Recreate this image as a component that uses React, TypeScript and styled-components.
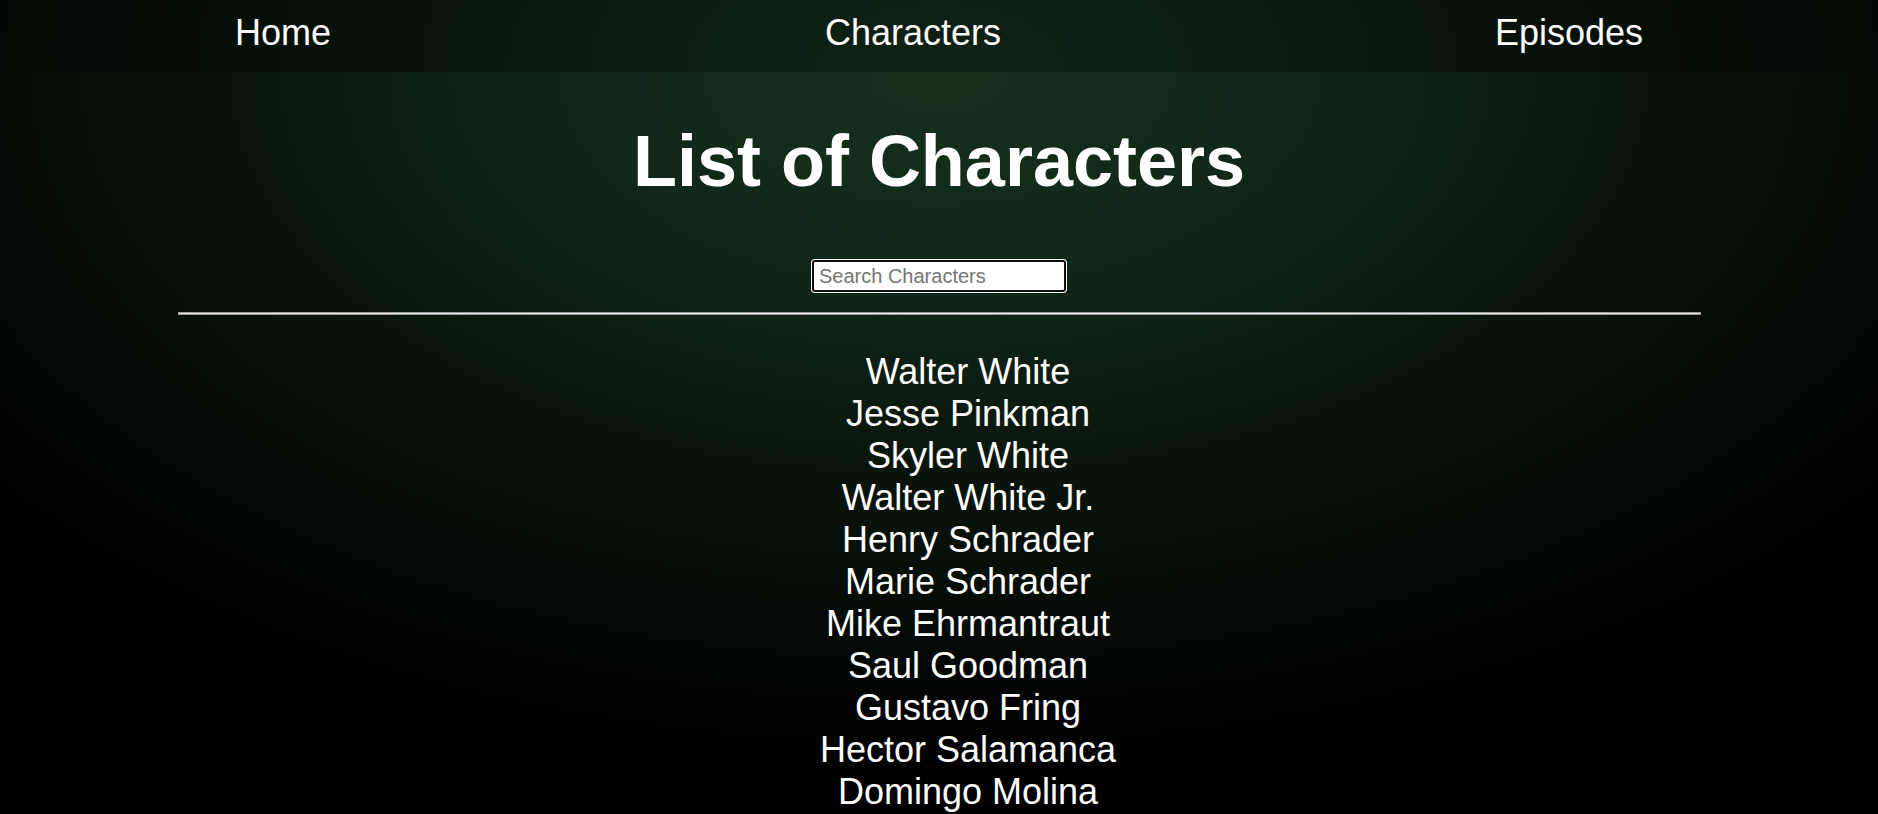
import styled, { createGlobalStyle } from "styled-components";

const characters = [
	"Walter White",
	"Jesse Pinkman",
	"Skyler White",
	"Walter White Jr.",
	"Henry Schrader",
	"Marie Schrader",
	"Mike Ehrmantraut",
	"Saul Goodman",
	"Gustavo Fring",
	"Hector Salamanca",
	"Domingo Molina",
];

const GlobalStyle = createGlobalStyle`
	html, body {
		margin: 0;
		padding: 0;
		overflow: hidden;
	}

	body {
		font-family: "Liberation Sans", Arial, sans-serif;
		color: #fff;
		background: #000;
	}
`;

const App = () => {
	return (
		<Page>
			<GlobalStyle />

			<Nav>
				<NavLink href="#">Home</NavLink>
				<NavLink href="#">Characters</NavLink>
				<NavLink href="#">Episodes</NavLink>
			</Nav>

			<Title>List of Characters</Title>

			<SearchRow>
				<SearchInput type="text" placeholder="Search Characters" />
			</SearchRow>

			<Divider />

			<CharacterList>
				{characters.map(name => (
					<li key={name}>{name}</li>
				))}
			</CharacterList>
		</Page>
	);
};

export default App;

const Page = styled.div`
	min-height: 100vh;
	background: radial-gradient(
		ellipse 65% 85% at 50% 9%,
		#16321c 0%,
		#11271a 28%,
		#0a170d 55%,
		#000 100%
	);
	text-align: center;
`;

const Nav = styled.nav`
	box-sizing: border-box;
	height: 72px;
	display: flex;
	justify-content: space-between;
	align-items: flex-start;
	padding: 12px 235px 0;
	background: rgba(0, 0, 0, 0.3);
`;

const NavLink = styled.a`
	color: #fff;
	text-decoration: none;
	font-size: 36px;
`;

const Title = styled.h1`
	margin: 48px 0;
	font-size: 72px;
	font-weight: 700;
`;

const SearchRow = styled.div`
	display: flex;
	justify-content: center;
	padding-top: 10px;
`;

const SearchInput = styled.input`
	box-sizing: border-box;
	width: 254px;
	height: 32px;
	padding: 1px 5px;
	border: 2px solid #101010;
	border-radius: 3px;
	box-shadow: 0 0 0 1px #fff;
	background: #fff;
	font-family: "Liberation Sans", Arial, sans-serif;
	font-size: 20px;
	color: #000;
	outline: none;

	&::placeholder {
		color: #757575;
	}
`;

const Divider = styled.hr`
	box-sizing: border-box;
	width: 1523px;
	height: 3px;
	margin: 20px auto 0;
	border: 1px solid #9a9a9a;
	background: #e6e6e6;
`;

const CharacterList = styled.ul`
	list-style: none;
	margin: 36px 0 0;
	padding: 0 0 0 58px;

	& li {
		font-size: 36px;
	}
`;
